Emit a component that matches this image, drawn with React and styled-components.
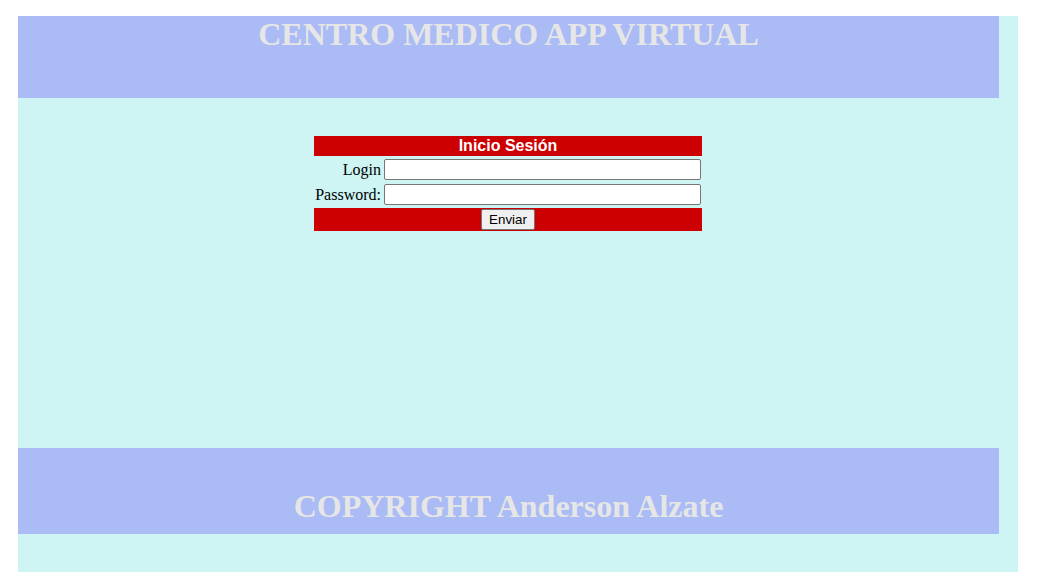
import React from 'react'
import styled, { createGlobalStyle } from "styled-components";

const GlobalStyle = createGlobalStyle`
    body {
        margin: 0;
        background: #ffffff;
        font-family: "Liberation Serif", "Times New Roman", serif;
    }
`

const Page = styled.div`
    margin: 16px 0 0 18px;
    width: 1000px;
    min-height: 600px;
    background-color: #cef5f4;
`
const Column = styled.div`
    width: 981px;
    display: flex;
    flex-direction: column;
`
const Banner = styled.div`
    height: ${props => props.$height}px;
    box-sizing: border-box;
    padding-top: ${props => props.$top}px;
    background-color: #aabbf5;
    text-align: center;
`
const BannerTitle = styled.h1`
    margin: 0;
    font-family: "Liberation Serif", "Times New Roman", serif;
    font-size: 32px;
    font-weight: 700;
    line-height: 37px;
    color: #e6e6e6;
`
const Main = styled.div`
    height: 350px;
    padding-top: 36px;
    box-sizing: border-box;
    display: flex;
    justify-content: center;
`
const Table = styled.table`
    width: 392px;
    border-spacing: 2px;
    margin-right: 1px;
    align-self: flex-start;
`
const RedCell = styled.td`
    background-color: #cc0000;
    text-align: center;
    padding: 1px;
    color: #ffffff;
    font-family: "Liberation Sans", Arial, sans-serif;
    font-size: 16px;
    font-weight: 700;
    line-height: 18px;
`
const Label = styled.td`
    text-align: right;
    padding: 1px 0 1px 0;
    font-size: 16px;
    white-space: nowrap;
    width: 68px;
`
const InputCell = styled.td`
    padding: 1px;
`
const Input = styled.input`
    display: block;
    box-sizing: border-box;
    width: 317px;
    height: 21px;
    margin: 0;
    border: 1px solid #767676;
    border-radius: 2px;
    background: #ffffff;
    font-family: "Liberation Sans", Arial, sans-serif;
    font-size: 13px;
`
const Button = styled.button`
    display: inline-block;
    vertical-align: top;
    width: 54px;
    height: 21px;
    padding: 1px 0;
    border: 1px solid #767676;
    border-radius: 2px;
    background: #efefef;
    color: #000000;
    font-family: "Liberation Sans", Arial, sans-serif;
    font-size: 13.33px;
    font-weight: 400;
`

export default function App() {
    return (
        <>
            <GlobalStyle />
            <Page>
                <Column>
                    <Banner $height={82} $top={0}>
                        <BannerTitle>CENTRO MEDICO APP VIRTUAL</BannerTitle>
                    </Banner>
                    <Main>
                        <Table>
                            <tbody>
                                <tr>
                                    <RedCell colSpan={2}>Inicio Sesión</RedCell>
                                </tr>
                                <tr>
                                    <Label>Login</Label>
                                    <InputCell><Input type="text" /></InputCell>
                                </tr>
                                <tr>
                                    <Label>Password:</Label>
                                    <InputCell><Input type="password" /></InputCell>
                                </tr>
                                <tr>
                                    <RedCell colSpan={2}><Button>Enviar</Button></RedCell>
                                </tr>
                            </tbody>
                        </Table>
                    </Main>
                    <Banner $height={86} $top={40}>
                        <BannerTitle>COPYRIGHT Anderson Alzate</BannerTitle>
                    </Banner>
                </Column>
            </Page>
        </>
    )
}
